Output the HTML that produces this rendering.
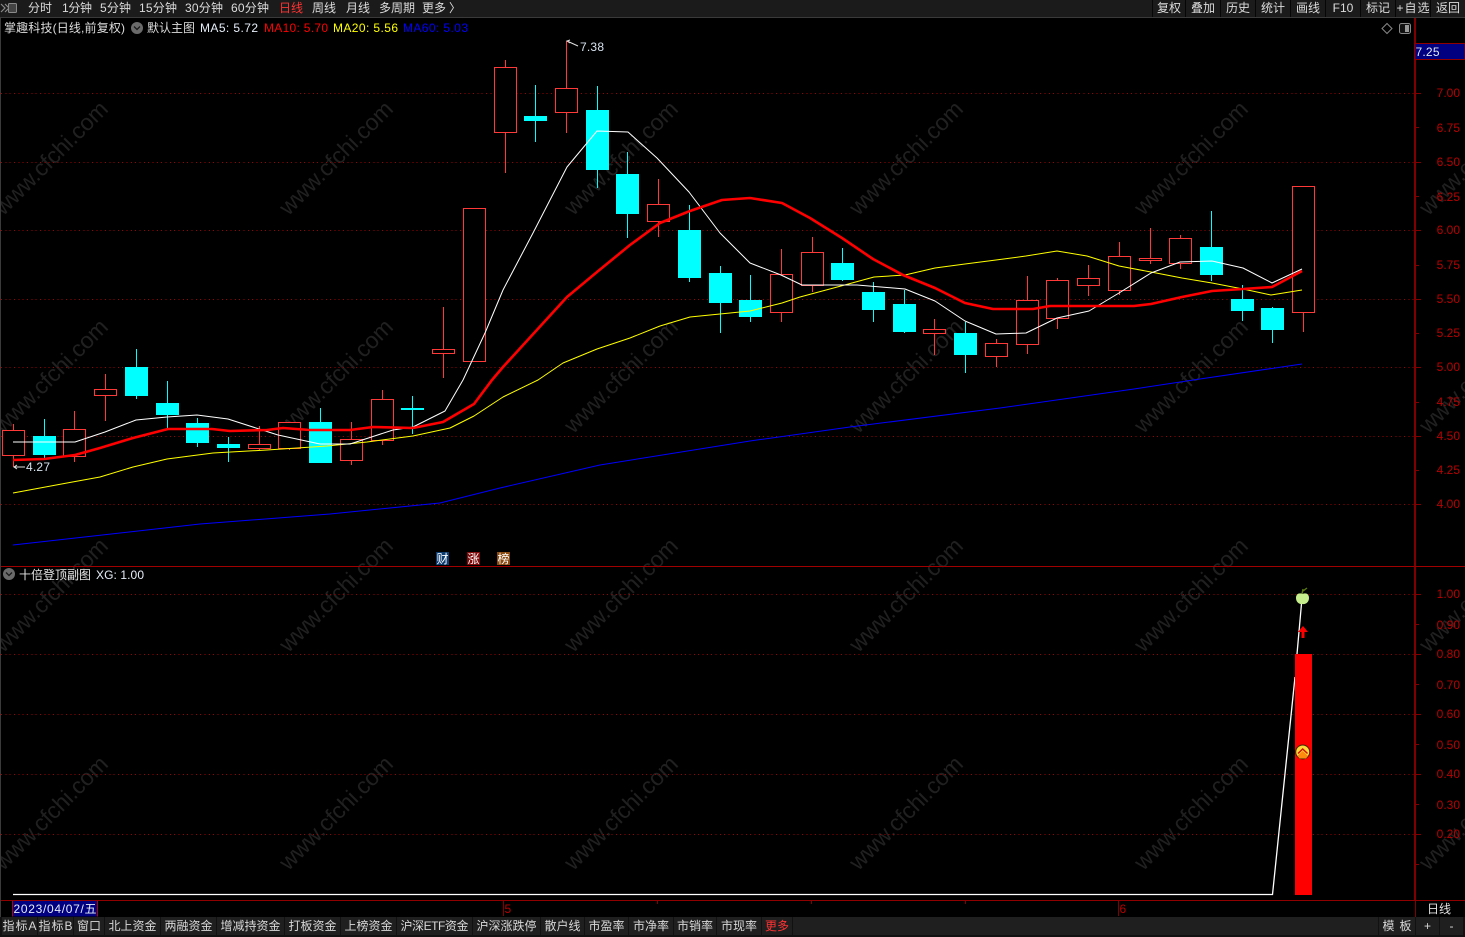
<!DOCTYPE html>
<html><head><meta charset="utf-8"><title>掌趣科技</title>
<style>
html,body{margin:0;padding:0;background:#000;width:1465px;height:937px;overflow:hidden}
svg{display:block}
text{font-family:"Liberation Sans","Noto Sans CJK SC",sans-serif;font-size:12px}
</style></head><body>
<svg width="1465" height="937" viewBox="0 0 1465 937" xmlns="http://www.w3.org/2000/svg">
<rect width="1465" height="937" fill="#000"/>
<!-- watermark -->
<g fill="#202020" text-anchor="middle" transform="translate(-2 -3)">
<text style="font-size:23px" transform="rotate(-45 52 160)" x="52" y="169" textLength="150">www.cfchi.com</text>
<text style="font-size:23px" transform="rotate(-45 337 160)" x="337" y="169" textLength="150">www.cfchi.com</text>
<text style="font-size:23px" transform="rotate(-45 622 160)" x="622" y="169" textLength="150">www.cfchi.com</text>
<text style="font-size:23px" transform="rotate(-45 907 160)" x="907" y="169" textLength="150">www.cfchi.com</text>
<text style="font-size:23px" transform="rotate(-45 1192 160)" x="1192" y="169" textLength="150">www.cfchi.com</text>
<text style="font-size:23px" transform="rotate(-45 1477 160)" x="1477" y="169" textLength="150">www.cfchi.com</text>
<text style="font-size:23px" transform="rotate(-45 52 378)" x="52" y="387" textLength="150">www.cfchi.com</text>
<text style="font-size:23px" transform="rotate(-45 337 378)" x="337" y="387" textLength="150">www.cfchi.com</text>
<text style="font-size:23px" transform="rotate(-45 622 378)" x="622" y="387" textLength="150">www.cfchi.com</text>
<text style="font-size:23px" transform="rotate(-45 907 378)" x="907" y="387" textLength="150">www.cfchi.com</text>
<text style="font-size:23px" transform="rotate(-45 1192 378)" x="1192" y="387" textLength="150">www.cfchi.com</text>
<text style="font-size:23px" transform="rotate(-45 1477 378)" x="1477" y="387" textLength="150">www.cfchi.com</text>
<text style="font-size:23px" transform="rotate(-45 52 597)" x="52" y="606" textLength="150">www.cfchi.com</text>
<text style="font-size:23px" transform="rotate(-45 337 597)" x="337" y="606" textLength="150">www.cfchi.com</text>
<text style="font-size:23px" transform="rotate(-45 622 597)" x="622" y="606" textLength="150">www.cfchi.com</text>
<text style="font-size:23px" transform="rotate(-45 907 597)" x="907" y="606" textLength="150">www.cfchi.com</text>
<text style="font-size:23px" transform="rotate(-45 1192 597)" x="1192" y="606" textLength="150">www.cfchi.com</text>
<text style="font-size:23px" transform="rotate(-45 1477 597)" x="1477" y="606" textLength="150">www.cfchi.com</text>
<text style="font-size:23px" transform="rotate(-45 52 815)" x="52" y="824" textLength="150">www.cfchi.com</text>
<text style="font-size:23px" transform="rotate(-45 337 815)" x="337" y="824" textLength="150">www.cfchi.com</text>
<text style="font-size:23px" transform="rotate(-45 622 815)" x="622" y="824" textLength="150">www.cfchi.com</text>
<text style="font-size:23px" transform="rotate(-45 907 815)" x="907" y="824" textLength="150">www.cfchi.com</text>
<text style="font-size:23px" transform="rotate(-45 1192 815)" x="1192" y="824" textLength="150">www.cfchi.com</text>
<text style="font-size:23px" transform="rotate(-45 1477 815)" x="1477" y="824" textLength="150">www.cfchi.com</text>
</g>
<!-- grid -->
<g stroke="#a00000" stroke-width="1" stroke-dasharray="1 3.33" shape-rendering="crispEdges">
<path d="M1 93.5H1415M1 162.5H1415M1 230.5H1415M1 299.5H1415M1 367.5H1415M1 436.5H1415M1 504.5H1415"/>
<path d="M1 594.5H1415M1 654.5H1415M1 714.5H1415M1 774.5H1415M1 834.5H1415"/>
</g>
<!-- red candles -->
<g fill="#000" stroke="#ff3838" stroke-width="1" shape-rendering="crispEdges">
<path fill="none" d="M13.5 424V430M13.5 456V467M74.5 411V429M74.5 457V462M105.5 374V389M105.5 396V421M259.5 426V444M259.5 449V450M289.5 449V450M351.5 422V439M351.5 461V465M382.5 390V399M382.5 441V445M443.5 307V349M443.5 354V378M505.5 60V67M505.5 133V173M566.5 41V88M566.5 113V133M658.5 179V204M658.5 222V237M781.5 249V274M781.5 313V322M812.5 237V252M812.5 286V292M934.5 319V329M934.5 334V355M996.5 339V343M996.5 357V367M1027.5 276V300M1027.5 345V354M1057.5 278V280M1057.5 319V329M1088.5 265V278M1088.5 286V296M1119.5 242V256M1119.5 291V295M1150.5 228V258M1150.5 261V264M1180.5 235V238M1180.5 264V269M1303.5 313V332"/>
<rect x="2.5" y="430.5" width="22" height="25"/>
<rect x="63.5" y="429.5" width="22" height="27"/>
<rect x="94.5" y="389.5" width="22" height="6"/>
<rect x="248.5" y="444.5" width="22" height="4"/>
<rect x="278.5" y="422.5" width="22" height="26"/>
<rect x="340.5" y="439.5" width="22" height="21"/>
<rect x="371.5" y="399.5" width="22" height="41"/>
<rect x="432.5" y="349.5" width="22" height="4"/>
<rect x="463.5" y="208.5" width="22" height="153"/>
<rect x="494.5" y="67.5" width="22" height="65"/>
<rect x="555.5" y="88.5" width="22" height="24"/>
<rect x="647.5" y="204.5" width="22" height="17"/>
<rect x="770.5" y="274.5" width="22" height="38"/>
<rect x="801.5" y="252.5" width="22" height="33"/>
<rect x="923.5" y="329.5" width="22" height="4"/>
<rect x="985.5" y="343.5" width="22" height="13"/>
<rect x="1016.5" y="300.5" width="22" height="44"/>
<rect x="1046.5" y="280.5" width="22" height="38"/>
<rect x="1077.5" y="278.5" width="22" height="7"/>
<rect x="1108.5" y="256.5" width="22" height="34"/>
<rect x="1139.5" y="258.5" width="22" height="2"/>
<rect x="1169.5" y="238.5" width="22" height="25"/>
<rect x="1292.5" y="186.5" width="22" height="126"/>
</g>
<!-- cyan candles -->
<g fill="#00ffff" stroke="none" shape-rendering="crispEdges">
<path stroke="#00ffff" stroke-width="1" d="M44.5 419V458M136.5 349V399M167.5 381V428M197.5 418V447M228.5 437V462M320.5 408V463M412.5 396V434M535.5 85V142M597.5 86V188M627.5 152V238M689.5 205V282M720.5 266V333M750.5 275V322M842.5 248V281M873.5 282V322M904.5 290V333M965.5 322V373M1211.5 211V281M1242.5 285V321M1272.5 307V343"/>
<rect x="33" y="436" width="23" height="19"/>
<rect x="125" y="367" width="23" height="29"/>
<rect x="156" y="403" width="23" height="12"/>
<rect x="186" y="423" width="23" height="20"/>
<rect x="217" y="444" width="23" height="4"/>
<rect x="309" y="422" width="23" height="41"/>
<rect x="401" y="408" width="23" height="2"/>
<rect x="524" y="116" width="23" height="5"/>
<rect x="586" y="110" width="23" height="60"/>
<rect x="616" y="174" width="23" height="40"/>
<rect x="678" y="230" width="23" height="48"/>
<rect x="709" y="273" width="23" height="30"/>
<rect x="739" y="300" width="23" height="17"/>
<rect x="831" y="263" width="23" height="17"/>
<rect x="862" y="292" width="23" height="18"/>
<rect x="893" y="304" width="23" height="28"/>
<rect x="954" y="333" width="23" height="22"/>
<rect x="1200" y="247" width="23" height="28"/>
<rect x="1231" y="299" width="23" height="12"/>
<rect x="1261" y="308" width="23" height="22"/>
</g>
<!-- MA lines -->
<g fill="none" stroke-linejoin="round">
<polyline stroke="#0000ff" stroke-width="1" points="13,545 200,524 330,514 440,503 500,488 600,465 750,441 850,427 1000,408 1134,389 1200,379 1302,364"/>
<polyline stroke="#ffff00" stroke-width="1" points="13,493 67,483 100,477 133,467 167,459 213,453 267,450 327,446 367,442 413,436 450,428 474,416 503,397 538,380 563,363 597,349 630,338 660,326 690,317 720,314 750,311 782,303 800,297 841,286 874,277 905,275 935,268 965,264 996,260 1026,256 1057,251 1087,256 1119,266 1151,272 1182,278 1212,283 1243,289 1271,295 1302,290"/>
<polyline stroke="#ffffff" stroke-width="1" points="13,442 75,442 105,432 136,420 167,417 197,415 228,419 259,429 278,435 320,444 350,444 393,430 413,427 445,411 463,380 485,333 503,290 533,233 567,167 597,131 628,132 657,158 689,192 720,233 750,263 781,275 802,285 857,285 905,289 935,301 965,321 996,334 1026,333 1057,318 1089,311 1119,293 1151,273 1180,262 1212,261 1243,268 1272,283 1302,269"/>
<polyline stroke="#ff0000" stroke-width="2.6" points="13,460 44,459 75,455 100,448 133,438 168,429 212,429 230,431 267,430 283,428 310,430 350,430 373,427 413,428 443,422 474,404 492,380 503,367 535,332 567,297 597,272 630,245 660,223 690,211 722,200 750,198 782,203 810,218 842,238 873,259 903,275 935,288 965,303 993,309 1033,309 1050,306 1134,306 1151,304 1182,297 1212,291 1243,289 1272,287 1302,271"/>
</g>
<!-- markers -->
<g fill="none" stroke="#e0e0e0" stroke-width="1">
<path d="M14 467H25M17 465L14 467L17 469"/>
<path d="M567 41L578 46M570 40L567 41L570 43"/>
</g>
<text x="26" y="471" fill="#d6e2ee" textLength="24">4.27</text>
<text x="580" y="51" fill="#d6e2ee" textLength="24">7.38</text>
<!-- badges -->
<rect x="436" y="552" width="13" height="13" fill="#0c3c70"/>
<rect x="467" y="552" width="13" height="13" fill="#7e0a0a"/>
<rect x="497" y="552" width="13" height="13" fill="#8a4a10"/>
<g fill="#fff" text-anchor="middle">
<text x="442.5" y="563">财</text><text x="473.5" y="563">涨</text><text x="503.5" y="563">榜</text>
</g>
<!-- sub panel -->
<path d="M1295 677L1272.5 894.5H13" fill="none" stroke="#fff" stroke-width="1.3"/>
<path d="M1297 654L1302 598" fill="none" stroke="#fff" stroke-width="1.3"/>
<rect x="1295" y="654" width="17" height="241" fill="#ff0000"/>
<!-- apple -->
<path d="M1302 594L1303 589M1303 591L1307 588" stroke="#5a7a10" stroke-width="1.4" fill="none"/>
<path d="M1296 598C1296 594 1299 592.500 1302.500 594C1306 592.500 1309 594 1309 598C1309 602 1306 604.500 1302.500 604C1299 604.500 1296 602 1296 598Z" fill="#c6ee8c"/>
<!-- arrow -->
<path d="M1303 626L1308 632H1304.500V638H1301.500V632H1298Z" fill="#ff0000"/>
<!-- circle -->
<circle cx="1302.700" cy="752" r="7.500" fill="#3a2a00"/>
<circle cx="1302.700" cy="752" r="6.500" fill="#ffd83a"/>
<path d="M1297.500 756L1302.700 751L1308 756L1306 758.500H1299.500Z" fill="#ff8a10"/>
<path d="M1298 753.500L1302.700 749L1307.500 753.500" fill="none" stroke="#d01000" stroke-width="1.500"/>
<!-- dividers / axes -->
<rect x="0" y="18" width="1" height="899" fill="#3a3a3a"/>
<rect x="1" y="566" width="1414" height="1" fill="#a00000"/>
<rect x="1414" y="18" width="2" height="883" fill="#800000"/>
<rect x="1" y="900" width="1464" height="1" fill="#900000"/>
<rect x="1415" y="566" width="50" height="1" fill="#a00000"/>
<g stroke="#800000" stroke-width="1" shape-rendering="crispEdges">
<path d="M1416 93.500H1421M1416 127.500H1419M1416 162.500H1421M1416 196.500H1419M1416 230.500H1421M1416 265.500H1419M1416 299.500H1421M1416 333.500H1419M1416 367.500H1421M1416 402.500H1419M1416 436.500H1421M1416 470.500H1419M1416 504.500H1421"/>
<path d="M1416 594.500H1421M1416 624.500H1419M1416 654.500H1421M1416 684.500H1419M1416 714.500H1421M1416 744.500H1419M1416 774.500H1421M1416 804.500H1419M1416 834.500H1421M1416 864.500H1419"/>
<path d="M503.500 901V916M1118.500 901V916M657.500 901V904M811.500 901V904M965.500 901V904M1415.500 901V917"/>
</g>
<g fill="#b80000" text-anchor="end">
<text x="1460" y="97">7.00</text><text x="1460" y="132">6.75</text><text x="1460" y="166">6.50</text><text x="1460" y="201">6.25</text><text x="1460" y="234">6.00</text><text x="1460" y="269">5.75</text><text x="1460" y="303">5.50</text><text x="1460" y="337">5.25</text><text x="1460" y="371">5.00</text><text x="1460" y="406">4.75</text><text x="1460" y="440">4.50</text><text x="1460" y="474">4.25</text><text x="1460" y="508">4.00</text>
<text x="1460" y="598">1.00</text><text x="1460" y="629">0.90</text><text x="1460" y="658">0.80</text><text x="1460" y="689">0.70</text><text x="1460" y="718">0.60</text><text x="1460" y="749">0.50</text><text x="1460" y="778">0.40</text><text x="1460" y="809">0.30</text><text x="1460" y="838">0.20</text>
</g>
<!-- price label -->
<rect x="1415" y="43.500" width="50" height="16" fill="#000080" stroke="#900000"/>
<text x="1415.500" y="56" fill="#dfe8f4" textLength="24">7.25</text>
<!-- date axis -->
<rect x="12.500" y="901" width="85" height="15.500" fill="#000080"/>
<path d="M12.500 901V916.500M97.500 901V916.500" stroke="#b00000" stroke-width="1"/>
<text x="13.500" y="913" fill="#e4ecf6" textLength="83">2023/04/07/五</text>
<text x="504.500" y="913" fill="#b80000">5</text>
<text x="1119.500" y="913" fill="#b80000">6</text>
<text x="1427" y="913" fill="#e0e0e0" textLength="24">日线</text>
<!-- top bar -->
<rect x="0" y="0" width="1465" height="17" fill="#1b1b1b"/>
<rect x="0" y="17" width="1465" height="1" fill="#3a3a3a"/>
<path d="M1 4L5 8L1 12M5 4L9 8L5 12" fill="none" stroke="#8a8a8a" stroke-width="1.200"/>
<rect x="8.500" y="3.500" width="8" height="9" fill="#444" stroke="#8a8a8a" rx="1"/>
<g fill="#dcdcdc">
<text x="28" y="12" textLength="24">分时</text>
<text x="62" y="12" textLength="30">1分钟</text>
<text x="100" y="12" textLength="31">5分钟</text>
<text x="139" y="12" textLength="38">15分钟</text>
<text x="185" y="12" textLength="38">30分钟</text>
<text x="231" y="12" textLength="38">60分钟</text>
<text x="279" y="12" fill="#ff3232" textLength="24">日线</text>
<text x="312" y="12" textLength="24">周线</text>
<text x="346" y="12" textLength="24">月线</text>
<text x="379" y="12" textLength="36">多周期</text>
<text x="422" y="12" textLength="24">更多</text>
<text x="449" y="12" textLength="7">〉</text>
</g>
<path d="M1152.500 0V17M1185.500 0V17M1220.500 0V17M1255.500 0V17M1290.500 0V17M1325.500 0V17M1360.500 0V17M1395.500 0V17M1430.500 0V17" stroke="#060606" stroke-width="1"/>
<g fill="#dcdcdc" text-anchor="middle">
<text x="1169" y="12">复权</text><text x="1203" y="12">叠加</text><text x="1238" y="12">历史</text><text x="1273" y="12">统计</text><text x="1308" y="12">画线</text><text x="1343" y="12">F10</text><text x="1378" y="12">标记</text><text x="1413" y="12" textLength="33">+自选</text><text x="1448" y="12">返回</text>
</g>
<!-- info row -->
<text x="4" y="32" fill="#dcdcdc" textLength="121">掌趣科技(日线,前复权)</text>
<circle cx="137" cy="28" r="6" fill="#6a6a6a"/>
<path d="M134 26.500L137 29.500L140 26.500" fill="none" stroke="#1a1a1a" stroke-width="1.300"/>
<text x="147" y="32" fill="#dcdcdc" textLength="48">默认主图</text>
<text x="200" y="32" fill="#e6eefa" textLength="58">MA5: 5.72</text>
<text x="264" y="32" fill="#ff0000" textLength="64">MA10: 5.70</text>
<text x="333" y="32" fill="#ffff00" textLength="65">MA20: 5.56</text>
<text x="403" y="32" fill="#0000ff" textLength="65">MA60: 5.03</text>
<path d="M1387 23.500L1392 28.500L1387 33.500L1382 28.500Z" fill="none" stroke="#888" stroke-width="1"/>
<rect x="1399.500" y="23.500" width="11" height="10" rx="2" fill="#111" stroke="#888" stroke-width="1"/>
<rect x="1405" y="25" width="4" height="7" fill="#999"/>
<!-- sub header -->
<circle cx="9" cy="574" r="6" fill="#6a6a6a"/>
<path d="M6 572.500L9 575.500L12 572.500" fill="none" stroke="#1a1a1a" stroke-width="1.300"/>
<text x="19" y="579" fill="#e6e6e6" textLength="72">十倍登顶副图</text>
<text x="96" y="579" fill="#e6eefa" textLength="48">XG: 1.00</text>
<!-- bottom tabs -->
<rect x="0" y="917" width="1465" height="20" fill="#111"/>
<g fill="#1f1f1f">
<rect x="2" y="917" width="35" height="18"/><rect x="38" y="917" width="35" height="18"/><rect x="74" y="917" width="30" height="18"/><rect x="105" y="917" width="55" height="18"/><rect x="161" y="917" width="55" height="18"/><rect x="217" y="917" width="67" height="18"/><rect x="285" y="917" width="55" height="18"/><rect x="341" y="917" width="55" height="18"/><rect x="397" y="917" width="75" height="18"/><rect x="473" y="917" width="67" height="18"/><rect x="541" y="917" width="43" height="18"/><rect x="585" y="917" width="43" height="18"/><rect x="629" y="917" width="44" height="18"/><rect x="674" y="917" width="42" height="18"/><rect x="717" y="917" width="44" height="18"/><rect x="762" y="917" width="30" height="18"/>
<rect x="793" y="917" width="585" height="18"/><rect x="1379" y="917" width="36" height="18"/><rect x="1416" y="917" width="23" height="18"/><rect x="1440" y="917" width="23" height="18"/>
</g>
<g fill="#d8d8d8" text-anchor="middle">
<text x="19.500" y="930" textLength="34">指标A</text><text x="55.500" y="930" textLength="34">指标B</text><text x="89" y="930">窗口</text><text x="132.500" y="930">北上资金</text><text x="188.500" y="930">两融资金</text><text x="250.500" y="930">增减持资金</text><text x="312.500" y="930">打板资金</text><text x="368.500" y="930">上榜资金</text><text x="434.500" y="930" textLength="68">沪深ETF资金</text><text x="506.500" y="930">沪深涨跌停</text><text x="562.500" y="930">散户线</text><text x="606.500" y="930">市盈率</text><text x="651" y="930">市净率</text><text x="695" y="930">市销率</text><text x="739" y="930">市现率</text><text x="777" y="930" fill="#ff3232">更多</text><text x="1397" y="930" textLength="29">模 板</text><text x="1427.500" y="930">+</text><text x="1451.500" y="930">-</text>
</g>
</svg>
</body></html>
